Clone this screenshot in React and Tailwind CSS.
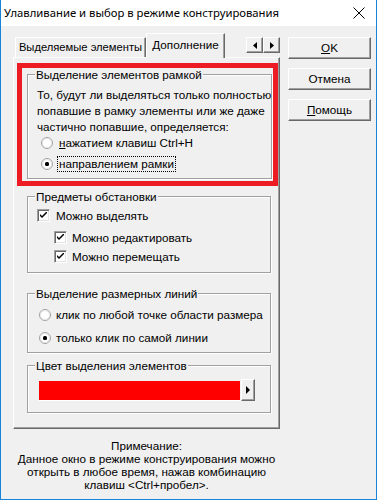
import React from 'react';

// классическая "выпуклая" рамка кнопки Windows
const raised =
  'border border-t-white border-l-white border-r-[#696969] border-b-[#696969] shadow-[inset_-1px_-1px_0_#a0a0a0]';
const sunken =
  'border border-t-[#a0a0a0] border-l-[#a0a0a0] border-r-white border-b-white shadow-[inset_1px_1px_0_#696969,inset_-1px_-1px_0_#e3e3e3]';

function Radio({ checked }) {
  return (
    <svg width="12" height="12" viewBox="0 0 12 12" className="shrink-0">
      <circle cx="6" cy="6" r="5.5" fill="#fff" stroke="#a0a0a0" />
      <circle cx="6" cy="6" r="4.5" fill="#fff" stroke="#e3e3e3" />
      {checked && <rect x="4" y="4" width="4" height="4" rx="1.5" fill="#000" />}
    </svg>
  );
}

function Check() {
  return (
    <div className={`w-[13px] h-[13px] bg-white shrink-0 flex items-center justify-center ${sunken}`}>
      <svg width="7" height="7" viewBox="0 0 7 7">
        <path d="M0 2 L0 4 L2 6 L7 1 L7 -1 L2 4 Z" fill="#000" />
      </svg>
    </div>
  );
}

function Group({ title, children, className = '' }) {
  return (
    <fieldset
      className={`border border-[#a0a0a0] shadow-[inset_1px_1px_0_#fff,1px_1px_0_#fff] ${className}`}
    >
      <legend className="ml-[7px] px-[1px] bg-[#f0f0f0] leading-[13px]">{title}</legend>
      {children}
    </fieldset>
  );
}

function Btn({ children }) {
  return (
    <div className={`w-[83px] h-[22px] flex items-center justify-center ${raised}`}>{children}</div>
  );
}

export default function App() {
  return (
    <div className="w-[377px] h-[500px] bg-[#f0f0f0] border border-t-0 border-[#1883d7] flex flex-col text-[11.7px] text-black whitespace-nowrap font-['Liberation_Sans',Arial,sans-serif]">
      {/* заголовок окна */}
      <div className="h-[26px] bg-white flex items-center justify-between pl-[3px] pr-[11px] shrink-0">
        <span className="text-[11.3px] font-['Noto_Sans',sans-serif]">
          Улавливание и выбор в режиме конструирования
        </span>
        <svg width="12" height="12" viewBox="0 0 12 12">
          <path d="M0.5 0.5 L11.5 11.5 M11.5 0.5 L0.5 11.5" stroke="#000" strokeWidth="1" />
        </svg>
      </div>

      <div className="flex flex-1">
        {/* левая часть: вкладки */}
        <div className="w-[287px] pl-[12px] pt-[7px] flex flex-col">
          <div className="h-[24px] flex items-end w-[267px]">
            <div className="ml-[2px] h-[20px] w-[131px] text-[11.2px] flex items-center justify-center border border-b-0 border-t-white border-l-white border-r-[#696969] shadow-[inset_-1px_0_0_#a0a0a0]">
              Выделяемые элементы
            </div>
            <div className="relative z-10 -mb-[1px] h-[25px] w-[79px] bg-[#f0f0f0] flex items-center justify-center pb-[2px] border border-b-0 border-t-white border-l-white border-r-[#696969] shadow-[inset_-1px_0_0_#a0a0a0]">
              Дополнение
            </div>
            <div className="ml-auto mb-[4px] flex">
              <div className={`w-[17px] h-[16px] flex items-center justify-center ${raised}`}>
                <svg width="4" height="7" viewBox="0 0 4 7">
                  <path d="M4 0 L0 3.5 L4 7 Z" fill="#000" />
                </svg>
              </div>
              <div className={`w-[17px] h-[16px] flex items-center justify-center ${raised}`}>
                <svg width="4" height="7" viewBox="0 0 4 7">
                  <path d="M0 0 L4 3.5 L0 7 Z" fill="#000" />
                </svg>
              </div>
            </div>
          </div>

          <div className={`w-[267px] h-[372px] pl-[3px] pr-[1px] pt-[5px] ${raised}`}>
            <div className="w-[261px] border-[5px] border-[#ed1c24] pl-[5px] pr-[3px] pb-[2px]">
              <Group title="Выделение элементов рамкой" className="pb-[8px]">
                <p className="pl-[9px] pt-[6px] leading-[16px]">
                  То, будут ли выделяться только полностью
                  <br />
                  попавшие в рамку элементы или же даже
                  <br />
                  частично попавшие, определяется:
                </p>
                <div className="pl-[13px] mt-[1px] flex flex-col gap-[8px]">
                  <div className="flex items-center gap-[6px] h-[13px]">
                    <Radio />
                    <span>
                      <span className="underline">н</span>ажатием клавиш Ctrl+H
                    </span>
                  </div>
                  <div className="flex items-center gap-[4px] h-[13px]">
                    <Radio checked />
                    <span className="border border-dotted border-black px-[1px] leading-[14px]">
                      направлением рамки
                    </span>
                  </div>
                </div>
              </Group>
            </div>

            <div className="pl-[10px] pr-[7px] flex flex-col">
              <Group title="Предметы обстановки" className="mt-[4px] h-[83px]">
                <div className="pl-[9px] pt-[6px] flex flex-col">
                  <div className="flex items-center gap-[6px] h-[13px]">
                    <Check />
                    <span>Можно выделять</span>
                  </div>
                  <div className="pl-[17px] mt-[9px] flex items-center gap-[5px] h-[13px]">
                    <Check />
                    <span>Можно редактировать</span>
                  </div>
                  <div className="pl-[17px] mt-[6px] flex items-center gap-[5px] h-[13px]">
                    <Check />
                    <span>Можно перемещать</span>
                  </div>
                </div>
              </Group>

              <Group title="Выделение размерных линий" className="mt-[14px] h-[66px]">
                <div className="pl-[11px] pt-[8px] flex flex-col gap-[10px]">
                  <div className="flex items-center gap-[5px] h-[13px]">
                    <Radio />
                    <span>клик по любой точке области размера</span>
                  </div>
                  <div className="flex items-center gap-[5px] h-[13px]">
                    <Radio checked />
                    <span>только клик по самой линии</span>
                  </div>
                </div>
              </Group>

              <Group title="Цвет выделения элементов" className="mt-[6px] h-[54px] w-[244px]">
                <div className="pl-[10px] pt-[7px] flex items-center">
                  <div className="w-[203px] h-[21px] bg-[#ff0000] border border-[#f0f0f0] border-b-white" />
                  <div className={`w-[14px] h-[22px] flex items-center justify-center ${raised}`}>
                    <svg width="4" height="8" viewBox="0 0 4 8">
                      <path d="M0 0 L4 4 L0 8 Z" fill="#000" />
                    </svg>
                  </div>
                </div>
              </Group>
            </div>
          </div>

          <div className="w-[267px] mt-[10px] text-center leading-[13px]">
            Примечание:
            <br />
            Данное окно в режиме конструирования можно
            <br />
            открыть в любое время, нажав комбинацию
            <br />
            клавиш &lt;Ctrl+пробел&gt;.
          </div>
        </div>

        {/* правая часть: кнопки */}
        <div className="pt-[11px] flex flex-col gap-[9px]">
          <Btn>
            <span>
              <span className="underline">O</span>K
            </span>
          </Btn>
          <Btn>Отмена</Btn>
          <Btn>
            <span>
              <span className="underline">П</span>омощь
            </span>
          </Btn>
        </div>
      </div>
    </div>
  );
}
